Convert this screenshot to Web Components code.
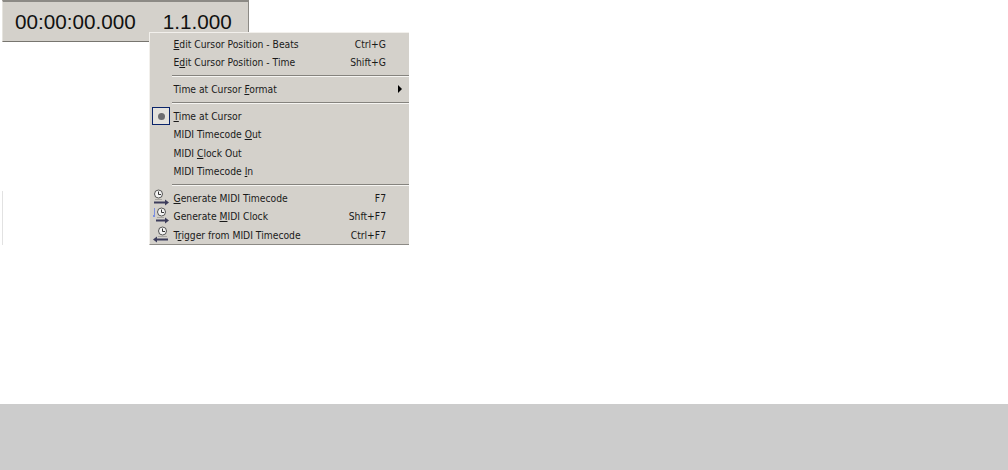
<!DOCTYPE html>
<html>
<head>
<meta charset="utf-8">
<style>
  html, body { margin: 0; padding: 0; background: #fff; }
</style>
</head>
<body>
<time-app>
  <time-bar slot="bar">
    <span>00:00:00.000</span>
    <span>1.1.000</span>
  </time-bar>
  <popup-menu slot="menu">
    <menu-row key="Ctrl+G"><u>E</u>dit Cursor Position - Beats</menu-row>
    <menu-row key="Shift+G">E<u>d</u>it Cursor Position - Time</menu-row>
    <menu-sep></menu-sep>
    <menu-row submenu>Time at Cursor <u>F</u>ormat</menu-row>
    <menu-sep></menu-sep>
    <menu-row checked><u>T</u>ime at Cursor</menu-row>
    <menu-row tall>MIDI Timecode <u>O</u>ut</menu-row>
    <menu-row>MIDI <u>C</u>lock Out</menu-row>
    <menu-row>MIDI Timecode <u>I</u>n</menu-row>
    <menu-sep></menu-sep>
    <menu-row key="F7">
      <svg slot="icon" width="18" height="18" viewBox="0 0 18 18">
        <circle cx="6.5" cy="5" r="4" fill="#f4f4f4" stroke="#555"/>
        <path d="M6.5 2.5V5.5H9" fill="none" stroke="#333"/>
        <path d="M3 10.5h7" stroke="#a9a7a3"/>
        <path d="M2 13.5h12" stroke="#3d3d5c" stroke-width="2"/>
        <path d="M13 10.5l4 3-4 3z" fill="#3d3d5c"/>
      </svg>
      <u>G</u>enerate MIDI Timecode
    </menu-row>
    <menu-row key="Shft+F7" tall>
      <svg slot="icon" width="18" height="18" viewBox="0 0 18 18">
        <path d="M2.5 1v7" stroke="#7b8fe0"/>
        <path d="M1 9h2" stroke="#7b8fe0" stroke-width="2"/>
        <circle cx="9.5" cy="5" r="4" fill="#f4f4f4" stroke="#555"/>
        <path d="M9.5 2.5V5.5H12" fill="none" stroke="#333"/>
        <path d="M5 10.5h7" stroke="#a9a7a3"/>
        <path d="M4 13.5h10" stroke="#3d3d5c" stroke-width="2"/>
        <path d="M13 10.5l4 3-4 3z" fill="#3d3d5c"/>
      </svg>
      Generate <u>M</u>IDI Clock
    </menu-row>
    <menu-row key="Ctrl+F7">
      <svg slot="icon" width="18" height="18" viewBox="0 0 18 18">
        <circle cx="10.5" cy="5" r="4" fill="#f4f4f4" stroke="#555"/>
        <path d="M10.5 2.5V5.5H13" fill="none" stroke="#333"/>
        <path d="M6 10.5h9" stroke="#a9a7a3"/>
        <path d="M5 13.5h11" stroke="#3d3d5c" stroke-width="2"/>
        <path d="M5 10.5l-4 3 4 3z" fill="#3d3d5c"/>
      </svg>
      T<u>r</u>igger from MIDI Timecode
    </menu-row>
  </popup-menu>
  <footer-band slot="footer"></footer-band>
</time-app>

<script>
class TimeApp extends HTMLElement {
  constructor() {
    super();
    this.attachShadow({ mode: "open" });
    this.shadowRoot.innerHTML = `
      <style>
        :host {
          display: flex;
          flex-direction: column;
          position: relative;
          width: 1008px;
          height: 470px;
          overflow: hidden;
        }
        .edge {
          width: 1px;
          height: 54px;
          margin: 149px 0 0 2px;
          background: #e2e2e2;
        }
        .menu {
          position: absolute;
          left: 149px;
          top: 32px;
        }
        .foot {
          margin-top: auto;
        }
      </style>
      <slot name="bar"></slot>
      <div class="edge"></div>
      <div class="menu"><slot name="menu"></slot></div>
      <div class="foot"><slot name="footer"></slot></div>
    `;
  }
}

class TimeBar extends HTMLElement {
  constructor() {
    super();
    this.attachShadow({ mode: "open" });
    this.shadowRoot.innerHTML = `
      <style>
        :host {
          display: flex;
          box-sizing: border-box;
          align-items: center;
          gap: 27px;
          width: 247px;
          height: 42px;
          margin-left: 2px;
          padding: 0 0 0 12px;
          background: #d4d1cb;
          border-top: 2px solid #8c8a85;
          border-right: 1px solid #8c8a85;
          border-bottom: 1px solid #77756f;
          border-left: 1px solid #e6e4de;
          font: 20.7px "Liberation Sans", Arial, sans-serif;
          color: #111;
        }
      </style>
      <slot></slot>
    `;
  }
}

class PopupMenu extends HTMLElement {
  constructor() {
    super();
    this.attachShadow({ mode: "open" });
    this.shadowRoot.innerHTML = `
      <style>
        :host {
          display: flex;
          flex-direction: column;
          box-sizing: border-box;
          width: 260px;
          height: 213px;
          padding: 2px 0 0 2px;
          background: #d4d1cb;
          border-top: 1px solid #f2f0ec;
          border-left: 1px solid #f2f0ec;
          border-bottom: 1px solid #8c8a85;
          font-family: "DejaVu Sans", Tahoma, sans-serif;
          font-stretch: condensed;
          font-size: 10.25px;
          color: #1a1a1a;
        }
      </style>
      <slot></slot>
    `;
  }
}

class MenuRow extends HTMLElement {
  constructor() {
    super();
    this.attachShadow({ mode: "open" });
    this.shadowRoot.innerHTML = `
      <style>
        :host {
          display: flex;
          align-items: center;
          height: 18px;
          flex: none;
        }
        :host([tall]) { margin-bottom: 1px; }
        .icon {
          box-sizing: border-box;
          display: flex;
          align-items: center;
          justify-content: center;
          flex: none;
          width: 18px;
          height: 18px;
          margin-right: 3.5px;
        }
        :host([checked]) .icon {
          border: 1px solid #0a246a;
          background: #e4e2dd;
        }
        .dot {
          display: none;
          width: 7px;
          height: 7px;
          border-radius: 50%;
          background: #6d6d70;
        }
        :host([checked]) .dot { display: block; }
        .label { flex: 1; white-space: nowrap; }
        .key { margin-right: 23px; white-space: nowrap; }
        .arrow {
          display: none;
          width: 0;
          height: 0;
          margin-right: 7px;
          border-left: 4px solid #000;
          border-top: 4px solid transparent;
          border-bottom: 4px solid transparent;
        }
        :host([submenu]) .arrow { display: block; }
      </style>
      <span class="icon"><span class="dot"></span><slot name="icon"></slot></span>
      <span class="label"><slot></slot></span>
      <span class="key"></span>
      <span class="arrow"></span>
    `;
  }

  connectedCallback() {
    this.shadowRoot.querySelector(".key").textContent = this.getAttribute("key") || "";
  }
}

class MenuSep extends HTMLElement {
  constructor() {
    super();
    this.attachShadow({ mode: "open" });
    this.shadowRoot.innerHTML = `
      <style>
        :host {
          display: block;
          flex: none;
          box-sizing: border-box;
          height: 9px;
          padding-top: 4px;
          margin-left: 20px;
        }
        div {
          height: 1px;
          background: #85837e;
          border-bottom: 1px solid #f6f5f2;
        }
      </style>
      <div></div>
    `;
  }
}

class FooterBand extends HTMLElement {
  constructor() {
    super();
    this.attachShadow({ mode: "open" });
    this.shadowRoot.innerHTML = `
      <style>
        :host { display: block; height: 66px; background: #cccccc; }
      </style>
    `;
  }
}

customElements.define("time-app", TimeApp);
customElements.define("time-bar", TimeBar);
customElements.define("popup-menu", PopupMenu);
customElements.define("menu-row", MenuRow);
customElements.define("menu-sep", MenuSep);
customElements.define("footer-band", FooterBand);
</script>
</body>
</html>
